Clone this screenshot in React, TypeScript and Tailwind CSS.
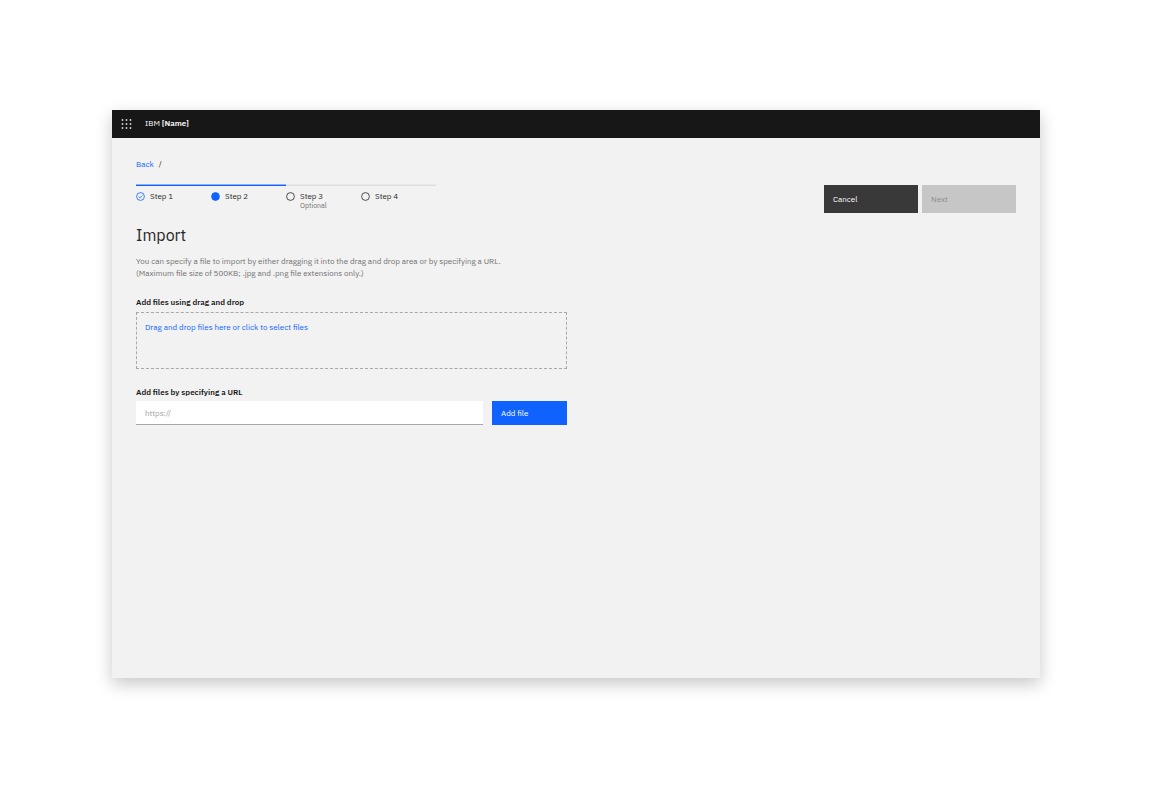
import React, { useState } from 'react';

type StepStatus = 'complete' | 'current' | 'incomplete';

interface Step {
  label: string;
  status: StepStatus;
  note?: string;
}

const steps: Step[] = [
  { label: 'Step 1', status: 'complete' },
  { label: 'Step 2', status: 'current' },
  { label: 'Step 3', status: 'incomplete', note: 'Optional' },
  { label: 'Step 4', status: 'incomplete' },
];

const AppSwitcherIcon: React.FC = () => (
  <svg className="w-3 h-3" viewBox="0 0 12 12" fill="currentColor" aria-hidden="true">
    {[2, 6, 10].map((y) =>
      [2.5, 6.5, 10.5].map((x) => <rect key={`${x}-${y}`} x={x - 0.75} y={y - 0.75} width="1.5" height="1.5" />)
    )}
  </svg>
);

const StepIcon: React.FC<{ status: StepStatus }> = ({ status }) => (
  <svg
    className={`w-[9px] h-[9px] mt-[2px] shrink-0 ${status === 'incomplete' ? 'text-[#262626]' : 'text-[#0f62fe]'}`}
    viewBox="0 0 9 9"
    fill="none"
    stroke="currentColor"
    aria-hidden="true"
  >
    <circle cx="4.5" cy="4.5" r="3.9" strokeWidth="0.8" fill={status === 'current' ? 'currentColor' : 'none'} />
    {status === 'complete' && <path d="M2.7 4.6l1.3 1.3 2.4-2.5" strokeWidth="0.8" />}
  </svg>
);

const ProgressIndicator: React.FC = () => (
  <ol className="flex">
    {steps.map(({ label, status, note }) => (
      <li
        key={label}
        aria-current={status === 'current' ? 'step' : undefined}
        className={`w-[75px] flex items-start gap-[5px] pt-1 ${
          status === 'incomplete'
            ? 'border-t border-[#dedede] shadow-[0_-1px_0_#e8e8e8]'
            : 'border-t border-[#0f62fe] shadow-[0_-1px_0_#8ab0fa]'
        }`}
      >
        <StepIcon status={status} />
        <span className="flex flex-col">
          <span className="leading-[12px]">{label}</span>
          {note && <span className="text-[7px] leading-[8px] text-[#6f6f6f]">{note}</span>}
        </span>
      </li>
    ))}
  </ol>
);

export default function App() {
  const [url, setUrl] = useState('');

  return (
    <div className="min-h-screen flex bg-white px-28 py-[110px] font-['IBM_Plex_Sans','Noto_Sans',sans-serif] text-[8px] leading-[12px] text-[#262626]">
      <div className="flex-1 flex flex-col bg-[#f2f2f2] shadow-[0_6px_16px_rgba(0,0,0,0.22)]">
        <header className="h-7 flex items-center bg-[#171717] text-white">
          <button type="button" aria-label="App switcher" className="w-7 h-7 flex items-center justify-center">
            <AppSwitcherIcon />
          </button>
          <p className="ml-[5px] pb-[2px]">
            IBM <span className="font-semibold">[Name]</span>
          </p>
        </header>

        <main className="flex-1 px-6 pt-5">
          <nav className="flex gap-[5px]">
            <a href="#back" className="text-[#0f62fe]">Back</a>
            <span>/</span>
          </nav>

          <div className="mt-[15px] h-7 flex justify-between">
            <ProgressIndicator />
            <div className="flex gap-1">
              <button type="button" className="w-[94px] h-7 px-[9px] text-left bg-[#393939] text-white">
                Cancel
              </button>
              <button type="button" disabled className="w-[94px] h-7 px-[9px] text-left bg-[#c6c6c6] text-[#8d8d8d]">
                Next
              </button>
            </div>
          </div>

          <div className="max-w-[431px]">
            <h1 className="mt-[10px] text-base leading-6">Import</h1>
            <p className="mt-2 text-[#6f6f6f]">
              You can specify a file to import by either dragging it into the drag and drop area or by specifying a URL.
              <br />
              (Maximum file size of 500KB; .jpg and .png file extensions only.)
            </p>

            <h2 className="mt-[17px] font-semibold text-[#171717]">Add files using drag and drop</h2>
            <label
              htmlFor="file-upload"
              className="mt-1 block h-[57px] p-2 border border-dashed border-[#a8a8a8] text-[#0f62fe] cursor-pointer"
            >
              Drag and drop files here or click to select files
            </label>
            <input id="file-upload" type="file" accept=".jpg,.png" multiple className="sr-only" />

            <label htmlFor="file-url" className="mt-[17px] block font-semibold text-[#171717]">
              Add files by specifying a URL
            </label>
            <div className="mt-[3px] flex gap-[9px]">
              <input
                id="file-url"
                type="url"
                value={url}
                onChange={(e) => setUrl(e.target.value)}
                placeholder="https://"
                className="flex-1 min-w-0 h-6 px-[9px] bg-white border-b border-[#a8a8a8] placeholder:text-[#a0a0a0]"
              />
              <button type="button" className="w-[75px] h-6 px-[9px] text-left bg-[#0f62fe] text-white">
                Add file
              </button>
            </div>
          </div>
        </main>
      </div>
    </div>
  );
}
